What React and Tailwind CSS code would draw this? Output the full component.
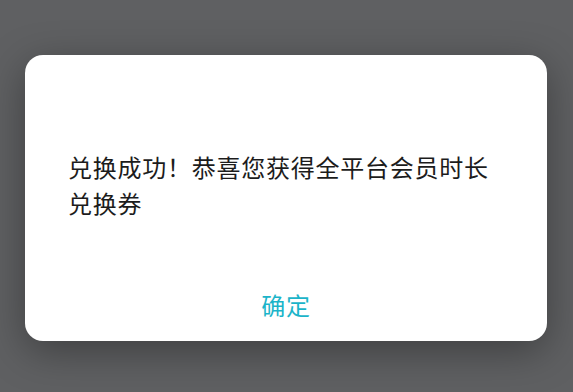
export default function App() {
  return (
    <div
      className="w-[573px] h-[392px] bg-[#5f6062] pt-[55px] pl-[25px] overflow-hidden"
      style={{ fontFamily: '"Noto Sans CJK SC", "Noto Sans", sans-serif' }}
    >
      <div className="w-[522px] h-[286px] bg-white rounded-[18px] shadow-[0_10px_40px_rgba(0,0,0,0.35)] flex flex-col pt-[94px] px-[43px]">
        <p className="text-[24px] leading-[36px] tracking-[0.75px] text-[#1c1c1c]">
          兑换成功！恭喜您获得全平台会员时长兑换券
        </p>
        <button className="mt-[66px] self-center text-[24px] leading-[36px] tracking-[0.75px] text-[#1bb4c9]">
          确定
        </button>
      </div>
    </div>
  );
}
